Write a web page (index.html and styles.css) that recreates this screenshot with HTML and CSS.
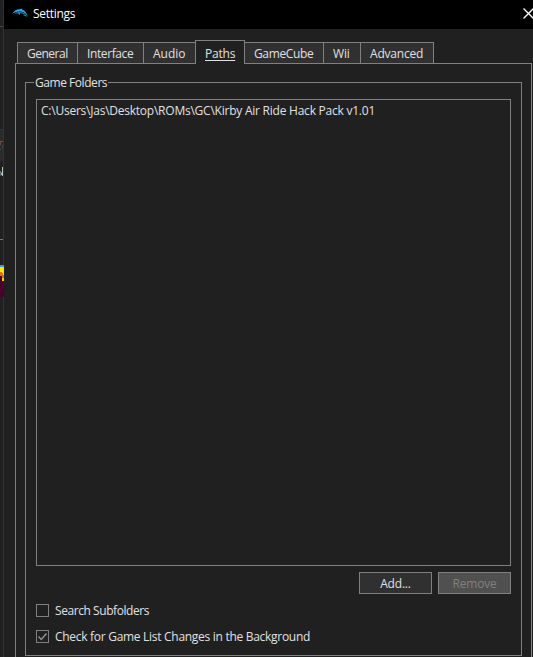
FILE: index.html
```
<!DOCTYPE html>
<html lang="en">
<head>
<meta charset="utf-8">
<title>Settings</title>
<link rel="stylesheet" href="styles.css">
</head>
<body>
<div class="screen">
  <aside class="behind">
    <div class="behind-top"></div>
    <div class="behind-body"></div>
    <div class="behind-head"><svg width="3" height="33" shape-rendering="crispEdges"><path d="M0 11h3v1H0z" fill="#555"/><path d="M0 12h1v3H0zM0 19h1v1H0z" fill="#76472d"/><path d="M2 15h1v4H2z" fill="#304258"/></svg></div>
    <div class="behind-row"><svg width="3" height="10" shape-rendering="crispEdges"><path d="M2 0h1v9H2zM1 6h1v2H1z" fill="#a9c5b5"/><path d="M0 4h1v2H0z" fill="#a66b35"/><path d="M0 6h1v3H0zM1 5h1v1H1z" fill="#26579a"/></svg></div>
    <div class="behind-art"><svg width="4" height="32" shape-rendering="crispEdges"><path d="M0 0h4v32H0z" fill="#4b0030"/><path d="M0 0h4v2H0z" fill="#3b9dda"/><path d="M0 2h4v8H3V8H0z" fill="#f5e900"/><path d="M0 7h2v1h1v2h1v3H2v-2H0z" fill="#f06a00"/><path d="M2 13h2v3H2z" fill="#e9d500"/></svg></div>
  </aside>
  <main class="window">
    <header class="titlebar">
      <svg class="logo" width="17" height="11" viewBox="0 0 17 11"><path d="M.3 5.600C1.800 3.200 4.200 1.200 7.500 1.200L10.300.5 10 1.600C13 2.700 14.700 5 15.600 8.700 14.300 6.300 12.300 3.600 8.500 3.500 5.500 3.300 3.200 4 .3 5.600Z" fill="#2ea6e2"/><path d="M3.300 5.200C6 4.200 10.500 4.300 13 6.300" fill="none" stroke="#1c7cb4" stroke-width="1.100"/><path d="M5.700 5 7.700 7.200 8.200 5ZM11 7.600 13.500 6.500 15.800 9.600 13.500 8Z" fill="#1f86bf"/></svg>
      <h1 class="title">Settings</h1>
      <svg class="close" width="11" height="11" viewBox="0 0 11 11"><path d="M.5.5 10.500 10.500M10.500.5.5 10.500" stroke="#fff" stroke-width="1.300"/></svg>
    </header>
    <nav class="tabs">
      <span class="tab general">General</span>
      <span class="tab interface">Interface</span>
      <span class="tab audio">Audio</span>
      <span class="tab paths active"><u>Paths</u></span>
      <span class="tab gamecube">GameCube</span>
      <span class="tab wii">Wii</span>
      <span class="tab advanced">Advanced</span>
    </nav>
    <section class="pane">
      <fieldset class="group">
        <legend>Game Folders</legend>
        <div class="list"><div class="item">C:\Users\Jas\Desktop\ROMs\GC\Kirby Air Ride Hack Pack v1.01</div></div>
        <div class="actions">
          <button class="btn add">Add...</button>
          <button class="btn remove" disabled>Remove</button>
        </div>
        <div class="check"><span class="box"></span><span class="search">Search Subfolders</span></div>
        <div class="check"><span class="box"><svg width="11" height="11" viewBox="0 0 11 11"><path d="M1.500 5.500 4.300 8.500 9.500 2.500" fill="none" stroke="#919191" stroke-width="1.500"/></svg></span><span class="background">Check for Game List Changes in the Background</span></div>
      </fieldset>
    </section>
  </main>
</div>
</body>
</html>
```
FILE: styles.css
```
* { box-sizing: border-box; }
body { margin: 0; background: #202020; overflow: hidden; }
.screen {
  display: flex; width: 533px; height: 657px; overflow: hidden;
  font: 12px/16px "Open Sans", "Noto Sans", sans-serif;
  color: #e0e0e0; letter-spacing: -0.2px; white-space: nowrap;
}
svg { display: block; }
.behind { width: 4px; flex: none; border-right: 1px solid #333; background: #202020; }
.behind-top { height: 27px; border-bottom: 1px solid #484848; }
.behind-body { height: 103px; border-bottom: 1px solid #333; }
.behind-head { height: 31px; background: #2b2b2b; overflow: hidden; }
.behind-row { height: 79px; padding-top: 6px; border-bottom: 1px solid #777; }
.behind-art { width: 4px; padding-top: 25px; }
.window { flex: 1; min-width: 0; height: 657px; overflow: hidden; }
.titlebar { height: 29px; padding-left: 8px; display: flex; background: #000; color: #fff; }
.logo { flex: none; margin-top: 8px; }
.title { margin: 6px 0 0 4px; font: inherit; letter-spacing: -0.3px; }
.close { flex: none; margin: 8px -1px 0 auto; }
.tabs { height: 35px; padding-left: 13px; display: flex; align-items: flex-end; position: relative; }
.tab {
  height: 22px; padding: 3px 0 0 9px; border: 1px solid #808080; border-left-width: 0;
  background: #303030;
}
.tab.general { width: 61px; border-left-width: 1px; letter-spacing: -0.5px; }
.tab.interface { width: 66px; letter-spacing: -0.4px; }
.tab.audio { width: 51px; border-right: 0; letter-spacing: 0; }
.tab.paths { width: 50px; }
.tab.active { height: 24px; padding-top: 5px; border-left-width: 1px; border-bottom: 0; background: #202020; }
.tab.gamecube { width: 79px; letter-spacing: -0.35px; }
.tab.wii { width: 37px; }
.tab.advanced { width: 73px; }
.tab u { text-underline-offset: 2px; }
.pane { width: 517px; height: 610px; margin: -1px 0 0 11px; padding: 11px 9px 0; border: 1px solid #808080; }
.group {
  height: 581px; margin: 0; min-width: 0; padding: 9px 10px 0; border: 1px solid #808080;
}
legend { height: 15px; width: 74px; margin-left: -2px; padding: 0 0 0 1px; letter-spacing: -0.45px; }
.list { height: 467px; border: 1px solid #808080; padding: 3px 4px; letter-spacing: -0.235px; }
.actions { display: flex; justify-content: flex-end; gap: 6px; margin: 6px 0 9px; }
.btn { width: 73px; height: 22px; padding: 1px 0 0; border: 1px solid #808080; background: #303030; color: inherit; font: inherit; letter-spacing: inherit; }
.btn.remove { background: #505050; color: #808080; }
.check { height: 16px; margin-bottom: 10px; display: flex; align-items: flex-start; gap: 6px; }
.box { width: 13px; height: 13px; margin-top: 1px; flex: none; border: 1px solid #808080; }
.search { letter-spacing: -0.43px; }
.background { letter-spacing: -0.29px; }
```
